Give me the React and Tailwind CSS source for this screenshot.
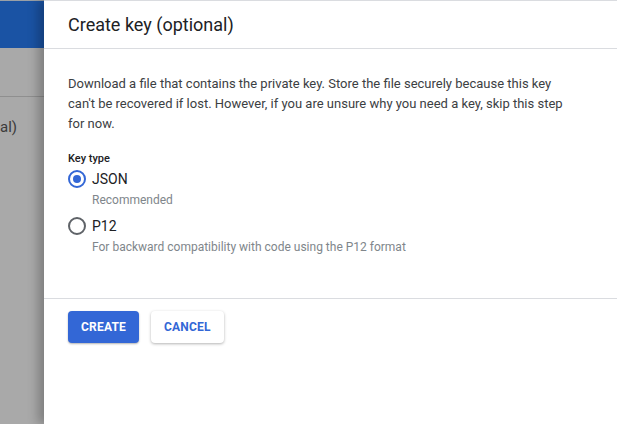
export default function App() {
  const font = { fontFamily: 'Roboto, "Liberation Sans", sans-serif' };
  return (
    <div className="flex h-[424px] w-[617px] overflow-hidden bg-white" style={font}>
      {/* dimmed page behind the panel */}
      <div className="flex w-[44px] shrink-0 flex-col bg-[#a9a9a9]">
        <div className="h-[48px] border-t border-[#9aa0a6] bg-[#1a53a4]" />
        <div className="h-[49px] border-b border-[#8f8f8f]" />
        <div className="pt-[20px] pl-0 text-[15px] leading-[20px] text-[#3b3b3b]">al)</div>
      </div>

      {/* side panel */}
      <div className="flex flex-1 flex-col border-t border-[#dadce0] shadow-[-6px_0_10px_rgba(0,0,0,0.25)]">
        <div className="flex h-[48px] items-center border-b border-[#dadce0] pl-[24px]">
          <h2 className="text-[18px] font-normal text-[#202124]">Create key (optional)</h2>
        </div>

        <div className="px-[24px] pt-[25px] pb-[42px]">
          <p className="text-[13px] leading-[20px] text-[#3c4043]">
            Download a file that contains the private key. Store the file securely because this key
            <br />
            can't be recovered if lost. However, if you are unsure why you need a key, skip this step
            <br />
            for now.
          </p>

          <div className="mt-[17px] text-[11px] font-medium leading-[16px] text-[#202124]">Key type</div>

          <label className="mt-[2px] flex items-center gap-[6px]">
            <span className="flex h-[18px] w-[18px] items-center justify-center rounded-full border-2 border-[#3367d6]">
              <span className="h-[8px] w-[8px] rounded-full bg-[#3367d6]" />
            </span>
            <span className="text-[14px] leading-[20px] text-[#202124]">JSON</span>
          </label>
          <div className="mt-[2px] pl-[24px] text-[12px] leading-[18px] text-[#80868b]">Recommended</div>

          <label className="mt-[7px] flex items-center gap-[6px]">
            <span className="h-[18px] w-[18px] rounded-full border-2 border-[#5f6368]" />
            <span className="text-[14px] leading-[20px] text-[#202124]">P12</span>
          </label>
          <div className="mt-[2px] pl-[24px] text-[12px] leading-[18px] text-[#80868b]">
            For backward compatibility with code using the P12 format
          </div>
        </div>

        <div className="flex gap-[12px] border-t border-[#dadce0] px-[24px] pt-[12px]">
          <button className="h-[32px] rounded-[4px] bg-[#3367d6] px-[13px] text-[12px] font-bold tracking-[0.2px] text-white shadow-[0_1px_2px_rgba(0,0,0,0.3)]">
            CREATE
          </button>
          <button className="h-[32px] rounded-[4px] bg-white px-[13px] text-[12px] font-bold tracking-[0.2px] text-[#3367d6] shadow-[0_1px_3px_rgba(0,0,0,0.3)]">
            CANCEL
          </button>
        </div>
      </div>
    </div>
  );
}
